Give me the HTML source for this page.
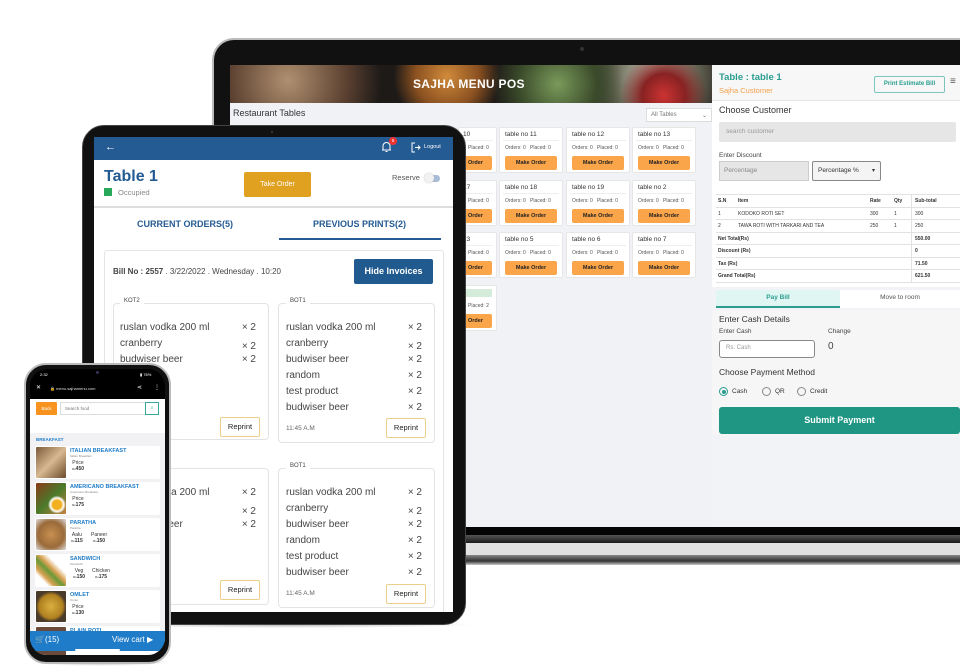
<!DOCTYPE html>
<html><head><meta charset="utf-8"><style>
*{margin:0;padding:0;box-sizing:border-box}
body{width:960px;height:671px;background:#fff;position:relative;overflow:hidden;font-family:"Liberation Sans",sans-serif;color:#333}
.a{position:absolute}
.t{position:absolute;white-space:nowrap}
.card{position:absolute;background:#fff;border:1px solid #e6e6e6;border-radius:2px;width:64px;height:46px;font-size:6px}
.card .h{position:absolute;left:5px;top:3px;font-size:6.5px;color:#333}
.card .l{position:absolute;left:3px;right:3px;top:12px;border-top:1px solid #eee}
.card .o{position:absolute;left:5px;top:17px;font-size:5px;color:#555}
.card .b{position:absolute;left:5px;right:5px;top:28px;height:14px;background:#fba54a;border-radius:2px;color:#222;font-size:5.5px;font-weight:bold;text-align:center;line-height:14px}
.row{position:absolute;left:0;right:0;height:12.5px;border-bottom:1px solid #e2e2e2;font-size:5px;line-height:12px}
.box{position:absolute;border:1px solid #e3e3e3;border-radius:4px;background:#fff}
.it{position:absolute;left:7px;right:12px;font-size:10px;color:#444}
.it span{position:absolute;right:0}
.rp{position:absolute;width:40px;height:20px;border:1px solid #eccf8a;border-radius:2px;font-size:7.5px;text-align:center;line-height:18px;color:#222;background:#fff}
.pi{position:absolute;left:5px;width:125px;height:33px;background:#fff;border-radius:2px}
.pi .im{position:absolute;left:1px;top:1px;width:30px;height:31px;border-radius:1px}
.pi .n{position:absolute;left:35px;top:2px;font-size:5.5px;font-weight:bold;color:#1e7cc8}
.pi .s{position:absolute;left:35px;top:8px;font-size:3px;color:#888}
.pi .p{position:absolute;top:14px;font-size:5px;color:#333;text-align:center}
</style></head><body>

<!-- LAPTOP -->
<div class="a" style="left:212px;top:38px;width:760px;height:492px;background:#111;border-radius:22px 0 0 0;border:2px solid #bbb;border-right:none;border-bottom:none"></div>
<div class="a" style="left:580px;top:47px;width:4px;height:4px;border-radius:50%;background:#333"></div>
<div class="a" style="left:230px;top:65px;width:730px;height:462px;background:#f1f2f5"></div>
<div class="a" style="left:230px;top:65px;width:482px;height:38px;background:radial-gradient(circle at 12% 40%,#b09070 0,#5a4030 14%,transparent 22%),radial-gradient(circle at 45% 30%,#d08a3a 0,#8a5020 12%,transparent 20%),radial-gradient(circle at 68% 50%,#7a9a5a 0,#3a4a2a 12%,transparent 20%),radial-gradient(circle at 90% 80%,#c33 0,#822 5%,transparent 10%),radial-gradient(circle at 88% 30%,#ccb 0,#665 10%,transparent 18%),#1e1a18"></div>
<div class="t" style="left:413px;top:77px;font-size:12px;font-weight:bold;color:#fff;letter-spacing:.3px">SAJHA MENU POS</div>
<div class="t" style="left:233px;top:108px;font-size:9px;color:#333">Restaurant Tables</div>
<div class="a" style="left:646px;top:108px;width:66px;height:14px;background:#fff;border:1px solid #ddd;font-size:6px;color:#777;padding:3px 4px">All Tables<span style="float:right">⌄</span></div>
<div class="card" style="left:458px;top:127px;width:39px"><div class="h" style="left:4px">10</div><div class="l"></div><div class="o" style="left:9px">Placed: 0</div><div class="b" style="left:0;right:4px">Order</div></div>
<div class="card" style="left:458px;top:180px;width:39px"><div class="h" style="left:4px">17</div><div class="l"></div><div class="o" style="left:9px">Placed: 0</div><div class="b" style="left:0;right:4px">Order</div></div>
<div class="card" style="left:458px;top:232px;width:39px"><div class="h" style="left:4px">23</div><div class="l"></div><div class="o" style="left:9px">Placed: 0</div><div class="b" style="left:0;right:4px">Order</div></div>
<div class="card" style="left:458px;top:285px;width:39px"><div class="a" style="left:4px;right:4px;top:3px;height:8px;background:#d4ecd9;font-size:5px;color:#393">ll</div><div class="o" style="left:9px">Placed: 2</div><div class="b" style="left:0;right:4px">Order</div></div>

<div class="card" style="left:499px;top:127px"><div class="h">table no 11</div><div class="l"></div><div class="o">Orders: 0 &nbsp; Placed: 0</div><div class="b">Make Order</div></div>
<div class="card" style="left:566px;top:127px"><div class="h">table no 12</div><div class="l"></div><div class="o">Orders: 0 &nbsp; Placed: 0</div><div class="b">Make Order</div></div>
<div class="card" style="left:632px;top:127px"><div class="h">table no 13</div><div class="l"></div><div class="o">Orders: 0 &nbsp; Placed: 0</div><div class="b">Make Order</div></div>
<div class="card" style="left:499px;top:180px"><div class="h">table no 18</div><div class="l"></div><div class="o">Orders: 0 &nbsp; Placed: 0</div><div class="b">Make Order</div></div>
<div class="card" style="left:566px;top:180px"><div class="h">table no 19</div><div class="l"></div><div class="o">Orders: 0 &nbsp; Placed: 0</div><div class="b">Make Order</div></div>
<div class="card" style="left:632px;top:180px"><div class="h">table no 2</div><div class="l"></div><div class="o">Orders: 0 &nbsp; Placed: 0</div><div class="b">Make Order</div></div>
<div class="card" style="left:499px;top:232px"><div class="h">table no 5</div><div class="l"></div><div class="o">Orders: 0 &nbsp; Placed: 0</div><div class="b">Make Order</div></div>
<div class="card" style="left:566px;top:232px"><div class="h">table no 6</div><div class="l"></div><div class="o">Orders: 0 &nbsp; Placed: 0</div><div class="b">Make Order</div></div>
<div class="card" style="left:632px;top:232px"><div class="h">table no 7</div><div class="l"></div><div class="o">Orders: 0 &nbsp; Placed: 0</div><div class="b">Make Order</div></div>

<div class="a" style="left:712px;top:65px;width:248px;height:462px;background:#f2f3f6"></div>
<div class="a" style="left:712px;top:65px;width:248px;height:36px;background:#f7f7f7;border-bottom:1px solid #e5e5e5"></div>
<div class="t" style="left:719px;top:72px;font-size:9.5px;color:#2a9d8f;font-weight:bold">Table : table 1</div>
<div class="t" style="left:719px;top:86px;font-size:7.5px;color:#f5a04a">Sajha Customer</div>
<div class="a" style="left:874px;top:76px;width:71px;height:17px;border:1px solid #7cc7bd;border-radius:2px;font-size:6px;color:#2a9d8f;text-align:center;line-height:15px;font-weight:bold">Print Estimate Bill</div>
<div class="t" style="left:950px;top:76px;font-size:10px;color:#555">≡</div>
<div class="a" style="left:712px;top:101px;width:248px;height:186px;background:#fff"></div>
<div class="t" style="left:719px;top:105px;font-size:9px;color:#333">Choose Customer</div>
<div class="a" style="left:719px;top:122px;width:237px;height:20px;background:#e6e6e6;border-radius:2px;font-size:6.5px;color:#999;padding:6px 7px">search customer</div>
<div class="t" style="left:719px;top:152px;font-size:6.5px;color:#444">Enter Discount</div>
<div class="a" style="left:719px;top:161px;width:90px;height:20px;background:#e6e6e6;border:1px solid #ccc;font-size:6.5px;color:#888;padding:5px 4px">Percentage</div>
<div class="a" style="left:812px;top:161px;width:69px;height:20px;border:1px solid #888;border-radius:2px;font-size:6.5px;color:#333;padding:5px 5px;background:#f4f4f4">Percentage %<span style="float:right;font-size:6px">▾</span></div>
<div class="a" style="left:716px;top:194px;width:244px;height:90px;border-top:1px solid #e2e2e2;font-size:5px">
 <div class="row" style="top:0;font-weight:bold"><span class="t" style="left:2px">S.N</span><span class="t" style="left:22px">Item</span><span class="t" style="left:154px">Rate</span><span class="t" style="left:178px">Qty</span><span class="t" style="left:199px">Sub-total</span></div>
 <div class="row" style="top:12.5px"><span class="t" style="left:2px">1</span><span class="t" style="left:22px">KODOKO ROTI SET</span><span class="t" style="left:154px">300</span><span class="t" style="left:178px">1</span><span class="t" style="left:199px">300</span></div>
 <div class="row" style="top:25px"><span class="t" style="left:2px">2</span><span class="t" style="left:22px">TAWA ROTI WITH TARKARI AND TEA</span><span class="t" style="left:154px">250</span><span class="t" style="left:178px">1</span><span class="t" style="left:199px">250</span></div>
 <div class="row" style="top:37.5px;font-weight:bold"><span class="t" style="left:2px">Net Total(Rs)</span><span class="t" style="left:199px">550.00</span></div>
 <div class="row" style="top:50px;font-weight:bold"><span class="t" style="left:2px">Discount (Rs)</span><span class="t" style="left:199px">0</span></div>
 <div class="row" style="top:62.5px;font-weight:bold"><span class="t" style="left:2px">Tax (Rs)</span><span class="t" style="left:199px">71.50</span></div>
 <div class="row" style="top:75px;font-weight:bold"><span class="t" style="left:2px">Grand Total(Rs)</span><span class="t" style="left:199px">621.50</span></div>
 <div class="a" style="left:195px;top:0;height:87px;border-left:1px solid #e2e2e2"></div>
</div>
<div class="a" style="left:716px;top:290px;width:124px;height:18px;background:#dff6f3;border-bottom:2px solid #2a9d8f;font-size:6.5px;color:#2a9d8f;font-weight:bold;text-align:center;line-height:16px;border-radius:3px 3px 0 0">Pay Bill</div>
<div class="a" style="left:840px;top:290px;width:120px;height:18px;background:#fff;font-size:6.5px;color:#555;text-align:center;line-height:16px">Move to room</div>
<div class="a" style="left:712px;top:310px;width:248px;height:125px;background:#f6f6f7"></div>
<div class="t" style="left:719px;top:314px;font-size:8.5px;color:#333">Enter Cash Details</div>
<div class="t" style="left:719px;top:328px;font-size:6.5px;color:#444">Enter Cash</div>
<div class="t" style="left:828px;top:328px;font-size:6.5px;color:#444">Change</div>
<div class="a" style="left:719px;top:340px;width:96px;height:18px;border:1px solid #888;border-radius:3px;background:#fff;font-size:6px;color:#999;padding:4px 6px">Rs. Cash</div>
<div class="t" style="left:828px;top:341px;font-size:10px;color:#444">0</div>
<div class="t" style="left:719px;top:367px;font-size:8.5px;color:#333">Choose Payment Method</div>
<div class="a" style="left:719px;top:387px;width:9px;height:9px;border:1px solid #2a9d8f;border-radius:50%"><div class="a" style="left:1.5px;top:1.5px;width:4px;height:4px;background:#2a9d8f;border-radius:50%"></div></div>
<div class="t" style="left:732px;top:388px;font-size:6.5px">Cash</div>
<div class="a" style="left:762px;top:387px;width:9px;height:9px;border:1px solid #888;border-radius:50%"></div>
<div class="t" style="left:775px;top:388px;font-size:6.5px">QR</div>
<div class="a" style="left:797px;top:387px;width:9px;height:9px;border:1px solid #888;border-radius:50%"></div>
<div class="t" style="left:810px;top:388px;font-size:6.5px">Credit</div>
<div class="a" style="left:719px;top:407px;width:241px;height:27px;background:#1e9683;border-radius:3px;color:#fff;font-size:9px;font-weight:bold;text-align:center;line-height:27px">Submit Payment</div>
<div class="a" style="left:212px;top:527px;width:748px;height:8px;background:#050505"></div>
<div class="a" style="left:222px;top:535px;width:738px;height:8px;background:linear-gradient(#555,#1a1a1a)"></div>
<div class="a" style="left:222px;top:543px;width:738px;height:12px;background:#e2e2e2"></div>
<div class="a" style="left:222px;top:555px;width:738px;height:10px;background:linear-gradient(#888,#333 60%,#ccc)"></div>

<!-- TABLET -->
<div class="a" style="left:96px;top:622px;width:380px;height:6px;background:radial-gradient(ellipse,#bbb,transparent 70%)"></div>
<div class="a" style="left:82px;top:125px;width:384px;height:500px;background:#111;border-radius:22px;border:1px solid #444"></div>
<div class="a" style="left:271px;top:131px;width:2px;height:2px;background:#444;border-radius:50%"></div>
<div class="a" style="left:94px;top:137px;width:359px;height:475px;background:#fff;overflow:hidden">
<div class="a" style="left:0;top:0;width:359px;height:23px;background:#255b93"></div>
<div class="t" style="left:11px;top:4px;font-size:11px;color:#fff">←</div>
<svg class="a" style="left:287px;top:4px" width="11" height="12" viewBox="0 0 11 12"><path d="M2 9 V5 a3.5 3.5 0 0 1 7 0 V9 H2 M1 9 H10 M4.5 10.5 h2" fill="none" stroke="#fff" stroke-width="1"/></svg>
<div class="a" style="left:295px;top:0;width:8px;height:8px;background:#e33;border-radius:50%;font-size:4.5px;color:#fff;text-align:center;line-height:8px">5</div>
<svg class="a" style="left:317px;top:5px" width="10" height="11" viewBox="0 0 10 11"><path d="M4 1 H1 V10 H4 M4 5.5 H9 M7 3.5 L9 5.5 L7 7.5" fill="none" stroke="#fff" stroke-width="1"/></svg>
<div class="t" style="left:330px;top:7px;font-size:5.5px;color:#fff">Logout</div>
<div class="t" style="left:10px;top:31px;font-size:16px;font-weight:bold;color:#255b93">Table 1</div>
<div class="a" style="left:10px;top:51px;width:8px;height:8px;background:#2aa85a"></div>
<div class="t" style="left:24px;top:51px;font-size:7.5px;color:#888">Occupied</div>
<div class="a" style="left:150px;top:35px;width:67px;height:25px;background:#e0a020;border-radius:2px;color:#fff;font-size:7px;text-align:center;line-height:25px">Take Order</div>
<div class="t" style="left:298px;top:36px;font-size:7.5px;color:#555">Reserve</div>
<div class="a" style="left:331px;top:38px;width:15px;height:7px;background:#a8bcd6;border-radius:4px"></div>
<div class="a" style="left:330px;top:36px;width:10px;height:10px;background:#f2f2f2;border-radius:50%;box-shadow:0 0 1px #999"></div>
<div class="a" style="left:0;top:69px;width:359px;height:2px;background:#ddd"></div>
<div class="t" style="left:43px;top:82px;font-size:9px;font-weight:bold;color:#255b93">CURRENT ORDERS(5)</div>
<div class="t" style="left:219px;top:82px;font-size:9px;font-weight:bold;color:#255b93">PREVIOUS PRINTS(2)</div>
<div class="a" style="left:185px;top:101px;width:162px;height:2px;background:#255b93"></div>
<div class="a" style="left:10px;top:113px;width:340px;height:380px;border:1px solid #e5e5e5;border-radius:3px"></div>
<div class="t" style="left:19px;top:130px;font-size:8px;color:#444"><b>Bill No : 2557</b> . 3/22/2022 . Wednesday . 10:20</div>
<div class="a" style="left:260px;top:122px;width:79px;height:25px;background:#215a8f;border-radius:2px;color:#fff;font-size:9px;font-weight:bold;text-align:center;line-height:25px">Hide Invoices</div>
</div>

<div class="box" style="left:113px;top:303px;width:156px;height:137px"></div>
<div class="t" style="left:120px;top:298px;font-size:6px;color:#444;background:#fff;padding:0 4px">KOT2</div>
<div class="it" style="left:120px;width:136px;top:322px">ruslan vodka 200 ml<span>× 2</span></div>
<div class="it" style="left:120px;width:136px;top:338px">cranberry<span style="top:3px">× 2</span></div>
<div class="it" style="left:120px;width:136px;top:354px">budwiser beer<span>× 2</span></div>
<div class="rp" style="left:220px;top:417px">Reprint</div>

<div class="box" style="left:278px;top:303px;width:157px;height:140px"></div>
<div class="t" style="left:286px;top:298px;font-size:6px;color:#444;background:#fff;padding:0 4px">BOT1</div>
<div class="it" style="left:286px;width:136px;top:322px">ruslan vodka 200 ml<span>× 2</span></div>
<div class="it" style="left:286px;width:136px;top:338px">cranberry<span style="top:3px">× 2</span></div>
<div class="it" style="left:286px;width:136px;top:354px">budwiser beer<span>× 2</span></div>
<div class="it" style="left:286px;width:136px;top:370px">random<span>× 2</span></div>
<div class="it" style="left:286px;width:136px;top:386px">test product<span>× 2</span></div>
<div class="it" style="left:286px;width:136px;top:402px">budwiser beer<span>× 2</span></div>
<div class="t" style="left:286px;top:425px;font-size:6.5px;color:#666">11:45 A.M</div>
<div class="rp" style="left:386px;top:418px">Reprint</div>

<div class="box" style="left:113px;top:468px;width:156px;height:137px"></div>
<div class="it" style="left:120px;width:136px;top:487px">ruslan vodka 200 ml<span>× 2</span></div>
<div class="it" style="left:120px;width:136px;top:503px">cranberry<span style="top:3px">× 2</span></div>
<div class="it" style="left:120px;width:136px;top:519px">budwiser beer<span>× 2</span></div>
<div class="rp" style="left:220px;top:580px">Reprint</div>

<div class="box" style="left:278px;top:468px;width:157px;height:140px"></div>
<div class="t" style="left:286px;top:463px;font-size:6px;color:#444;background:#fff;padding:0 4px">BOT1</div>
<div class="it" style="left:286px;width:136px;top:487px">ruslan vodka 200 ml<span>× 2</span></div>
<div class="it" style="left:286px;width:136px;top:503px">cranberry<span style="top:3px">× 2</span></div>
<div class="it" style="left:286px;width:136px;top:519px">budwiser beer<span>× 2</span></div>
<div class="it" style="left:286px;width:136px;top:535px">random<span>× 2</span></div>
<div class="it" style="left:286px;width:136px;top:551px">test product<span>× 2</span></div>
<div class="it" style="left:286px;width:136px;top:567px">budwiser beer<span>× 2</span></div>
<div class="t" style="left:286px;top:590px;font-size:6.5px;color:#666">11:45 A.M</div>
<div class="rp" style="left:386px;top:584px">Reprint</div>

<!-- PHONE -->
<div class="a" style="left:30px;top:658px;width:140px;height:8px;background:radial-gradient(ellipse,#aaa,transparent 70%)"></div>
<div class="a" style="left:24px;top:363px;width:147px;height:301px;background:#111;border-radius:22px;border:2px solid #bbb"></div>
<div class="a" style="left:30px;top:369px;width:135px;height:286px;background:#000;border-radius:17px;overflow:hidden">
 <div class="t" style="left:10px;top:3px;font-size:4px;color:#fff">2:32</div>
 <div class="a" style="left:30px;top:0;width:75px;height:8px;background:#000;border-radius:0 0 8px 8px"></div>
 <div class="a" style="left:66px;top:2px;width:3px;height:3px;background:#335;border-radius:50%"></div>
 <div class="t" style="left:110px;top:3px;font-size:4px;color:#fff">▮ 76%</div>
 <div class="t" style="left:6px;top:15px;font-size:6px;color:#fff">✕</div>
 <div class="t" style="left:20px;top:17px;font-size:4px;color:#ddd">🔒 menu.sajhamenu.com</div>
 <div class="t" style="left:107px;top:15px;font-size:6px;color:#fff">⋖</div>
 <div class="t" style="left:124px;top:15px;font-size:6px;color:#fff">⋮</div>
 <div class="a" style="left:0;top:30px;width:135px;height:243px;background:#f2f2f4">
  <div class="a" style="left:0;top:0;width:135px;height:34px;background:#fff"></div>
  <div class="a" style="left:6px;top:3px;width:21px;height:13px;background:#f7931e;border-radius:1px;color:#fff;font-size:4.5px;text-align:center;line-height:13px">Back</div>
  <div class="a" style="left:30px;top:3px;width:99px;height:13px;border:1px solid #ddd;font-size:4.5px;color:#777;padding:3px 4px">Search food</div>
  <div class="a" style="left:115px;top:3px;width:14px;height:13px;border:1px solid #3a9;font-size:5px;color:#3a9;text-align:center;line-height:11px">⌕</div>
  <div class="t" style="left:6px;top:38px;font-size:4.5px;color:#1e7cc8;font-weight:bold">BREAKFAST</div>
  <div class="pi" style="top:47px"><div class="im" style="background:linear-gradient(135deg,#7a5a3a,#d8b890 50%,#6a4a2a)"></div><div class="n">ITALIAN BREAKFAST</div><div class="s">Italian Breakfast</div><div class="p" style="left:37px">Price<br><small style="font-size:3px">Rs</small><b>450</b></div></div>
  <div class="pi" style="top:83px"><div class="im" style="background:radial-gradient(circle at 70% 70%,#f2b020 15%,#fff 22%,transparent 30%),linear-gradient(135deg,#8a3a1a,#4a7a2a 50%,#c58040)"></div><div class="n">AMERICANO BREAKFAST</div><div class="s">Americano Breakfast</div><div class="p" style="left:37px">Price<br><small style="font-size:3px">Rs</small><b>175</b></div></div>
  <div class="pi" style="top:119px"><div class="im" style="background:radial-gradient(circle,#c89050,#9a6a3a 60%,#ddd)"></div><div class="n">PARATHA</div><div class="s">Paratha</div><div class="p" style="left:36px">Aalu<br><small style="font-size:3px">Rs</small><b>115</b></div><div class="p" style="left:56px">Paneer<br><small style="font-size:3px">Rs</small><b>150</b></div></div>
  <div class="pi" style="top:155px"><div class="im" style="background:linear-gradient(45deg,#fff 20%,#d9a050 30%,#6a9a3a 45%,#d9a050 55%,#fff 70%)"></div><div class="n">SANDWICH</div><div class="s">Sandwich</div><div class="p" style="left:38px">Veg<br><small style="font-size:3px">Rs</small><b>150</b></div><div class="p" style="left:57px">Chicken<br><small style="font-size:3px">Rs</small><b>175</b></div></div>
  <div class="pi" style="top:191px"><div class="im" style="background:radial-gradient(circle,#d9b040,#b08020 55%,#4a3a2a 70%)"></div><div class="n">OMLET</div><div class="s">Omlet</div><div class="p" style="left:37px">Price<br><small style="font-size:3px">Rs</small><b>130</b></div></div>
  <div class="pi" style="top:227px"><div class="im" style="background:#6a4a3a"></div><div class="n">PLAIN ROTI</div></div>
 </div>
 <div class="a" style="left:0;top:262px;width:135px;height:20px;background:#1e7cc8;color:#fff;font-size:8px;line-height:17px"><span class="t" style="left:5px">🛒(15)</span><span class="t" style="left:82px">View cart ▶</span></div>
 <div class="a" style="left:45px;top:280px;width:45px;height:2px;background:#fff;border-radius:1px"></div>
</div>
</body></html>
